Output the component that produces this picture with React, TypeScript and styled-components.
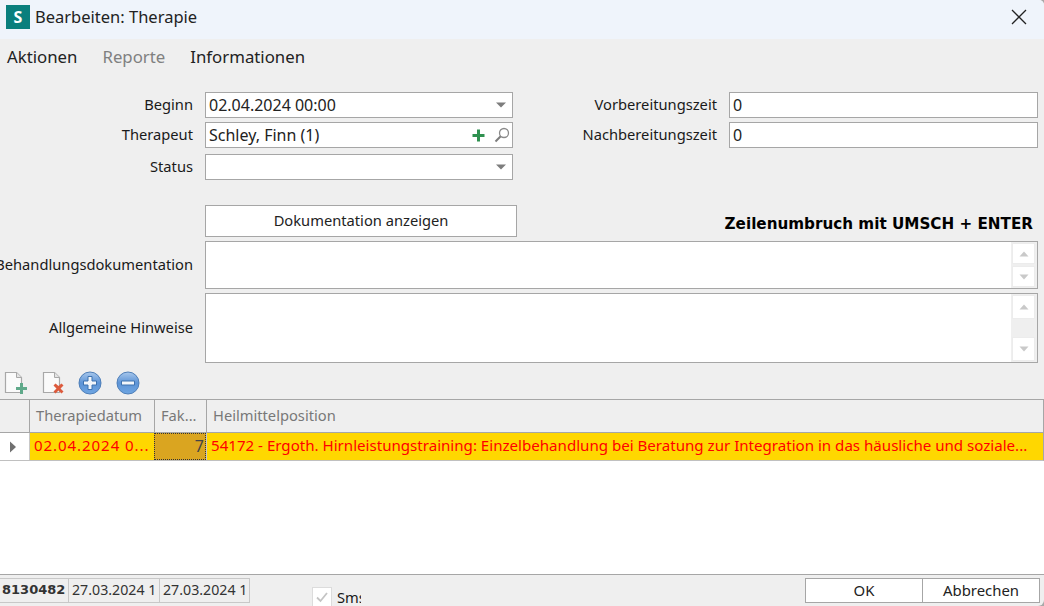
import React from "react";
import styled, { createGlobalStyle } from "styled-components";

const Global = createGlobalStyle`
  html, body { margin: 0; padding: 0; background: #a8a8a8; }
  body { width: 1044px; height: 606px; overflow: hidden; }
  * { box-sizing: border-box; }
`;

const FONT = `"Noto Sans", "Open Sans", "Liberation Sans", sans-serif`;

const Win = styled.div`
  width: 1044px; height: 606px; overflow: hidden; display: flex; flex-direction: column;
  background: #efefef; font-family: ${FONT}; font-size: 14.7px; color: #1a1a1a;
  border-radius: 0 5px 6px 0;
`;
const TitleBar = styled.div`
  height: 39px; flex: none; background: #eff4fb; display: flex; align-items: center; padding: 0 17px 6px 6px;
`;
const Logo = styled.div`
  width: 24px; height: 24px; background: #0a7f7d; color: #fff; font-weight: 700; font-size: 16px;
  display: flex; align-items: center; justify-content: center; margin-right: 5px;
`;
const Title = styled.div`font-size: 16.5px; flex: 1; color: #222;`;
const Menu = styled.div`
  height: 36px; flex: none; display: flex; align-items: center; padding: 0 0 2px 7px; gap: 25px; font-size: 16.8px;
`;
const MenuItem = styled.span<{ $off?: boolean }>`color: ${(p) => (p.$off ? "#808080" : "#222")};`;

const Form = styled.div`flex: none; padding-top: 17px; height: 292px; display: flex; flex-direction: column;`;
const Fields = styled.div`display: flex;`;
const FieldCol = styled.div<{ $w: number }>`width: ${(p) => p.$w}px; display: flex; flex-direction: column; flex: none;`;
const Row = styled.div<{ $mb?: number }>`
  display: flex; align-items: center; height: 26px; margin-bottom: ${(p) => p.$mb ?? 0}px;
`;
const Label = styled.div<{ $w: number }>`
  width: ${(p) => p.$w}px; flex: none; display: flex; justify-content: flex-end; padding: 0 12px 2px 0;
  white-space: nowrap; color: #1a1a1a;
`;
const Input = styled.div`
  height: 26px; flex: 1;
  background: #fff; border: 1px solid #a6a6a6; display: flex; align-items: center; padding: 0 2px 0 3px; color: #222;
  font-size: 16px; line-height: 22px;
`;
const InputText = styled.span`flex: 1; white-space: nowrap;`;
const ButtonRow = styled.div`display: flex; align-items: flex-end; margin-top: 25px; margin-bottom: 4px; height: 32px;`;
const DocButton = styled.div`
  margin-left: 205px; width: 312px; height: 32px; background: #fff; border: 1px solid #a6a6a6; padding-bottom: 2px;
  display: flex; align-items: center; justify-content: center; color: #222;
`;
const Hint = styled.div`
  margin: 0 0 4px auto; padding-right: 11px; font-weight: 700; font-size: 15.2px; font-family: "DejaVu Sans", sans-serif;
  color: #000; line-height: 18px; white-space: nowrap;
`;
const MemoRow = styled.div<{ $h: number }>`display: flex; align-items: center; height: ${(p) => p.$h}px; margin-bottom: 4px;`;
const Memo = styled.div`
  width: 833px; height: 100%; background: #fff; border: 1px solid #a6a6a6; display: flex; justify-content: flex-end;
`;
const Scroll = styled.div`
  width: 26px; background: #efefef; display: flex; flex-direction: column; justify-content: space-between; padding: 1px 2px 1px 1px;
`;
const ScrollBtn = styled.div<{ $h: number }>`
  height: ${(p) => p.$h}px; background: #fff; border: 1px solid #ececec; display: flex; align-items: center; justify-content: center;
`;
const Tools = styled.div`height: 28px; margin-top: 2px; flex: none; display: flex; align-items: center; padding-left: 3px; gap: 13.5px;`;

const Table = styled.div`
  flex: 1; margin-top: 2px; background: #fff; border-top: 1px solid #a6a6a6; border-bottom: 1px solid #a6a6a6; display: flex; flex-direction: column;
`;
const COLS = "29px 125px 52px 1fr";
const Head = styled.div`
  height: 33px; display: grid; grid-template-columns: ${COLS}; background: #efefef; border-bottom: 1px solid #a6a6a6; flex: none;
  border-right: 1px solid #a6a6a6;
`;
const HeadCell = styled.div`
  border-left: 1px solid #a6a6a6; padding: 0 0 2px 6px; display: flex; align-items: center; color: #787878; white-space: nowrap;
  &:first-child { border-left: 0; }
`;
const DataRow = styled.div`
  height: 28px; display: grid; grid-template-columns: ${COLS}; flex: none; border-bottom: 1px solid #c0c0c0; border-right: 1px solid #a6a6a6;
`;
const Indicator = styled.div`background: #fff; display: flex; align-items: center; padding-left: 9px;`;
const Cell = styled.div<{ $digits?: boolean }>`
  background: #ffd700; color: #f00; padding: 0 0 3px 4px; display: flex; align-items: center; overflow: hidden;
  border-left: 1px solid #c8c8c8; font-size: 15.1px; letter-spacing: ${(p) => (p.$digits ? "0.9px" : "0")};
  white-space: nowrap;
`;
const FocusCell = styled.div`
  background: #daa520; color: #444; display: flex; align-items: center; justify-content: flex-end; padding: 0 2px 2px 0;
  outline: 1px dotted #333; outline-offset: -1px; font-size: 16px;
`;

const Bottom = styled.div`height: 31px; flex: none; display: flex; padding: 3px 4px 0 0;`;
const Stamp = styled.div`display: flex; height: 25px;`;
const StampCell = styled.div<{ $w: number; $bold?: boolean }>`
  width: ${(p) => p.$w}px; border: 1px solid #c8c8c8; border-left-width: ${(p) => (p.$bold ? 0 : 1)}px; margin-left: ${(p) => (p.$bold ? 0 : -1)}px;
  display: flex; align-items: center; padding: 0 0 2px ${(p) => (p.$bold ? 2 : 3)}px; white-space: nowrap; overflow: hidden; color: #333;
  font-weight: ${(p) => (p.$bold ? 700 : 400)}; font-family: ${(p) => (p.$bold ? `"DejaVu Sans", sans-serif` : FONT)};
  font-size: ${(p) => (p.$bold ? 13 : 14.2)}px;
`;
const Check = styled.div`
  margin: 9px 0 0 62px; width: 49px; height: 30px; display: flex; gap: 5px; overflow: hidden; white-space: nowrap; flex: none;
`;
const CheckBox = styled.div`
  width: 20px; height: 20px; flex: none; background: #fff; border: 1px solid #dcdcdc; display: flex; align-items: center; justify-content: center;
`;
const Actions = styled.div`margin-left: auto; display: flex; height: 25px;`;
const Action = styled.div`
  width: 118px; background: #fff; border: 1px solid #a6a6a6; display: flex; align-items: center; justify-content: center; color: #222;
  font-size: 14.9px; padding-bottom: 1px; & + & { margin-left: -1px; }
`;

const Caret = () => (
  <svg width="12" height="6" viewBox="0 0 12 6" style={{ marginRight: 3 }}><path d="M1 0.5h10L6 5.5z" fill="#7d7d7d" /></svg>
);
const Tri = ({ up }: { up?: boolean }) => (
  <svg width="10" height="6" viewBox="0 0 10 6"><path d={up ? "M5 0.5L9.5 5.5H0.5z" : "M0.5 0.5H9.5L5 5.5z"} fill="#c9c9c9" /></svg>
);
const Plus = () => (
  <svg width="13" height="13" viewBox="0 0 13 13" style={{ marginRight: 9 }}><path d="M5 .5h3V5h4.500v3H8v4.500H5V8H.5V5H5z" fill="#2f9150" /></svg>
);
const Search = () => (
  <svg width="16" height="16" viewBox="0 0 16 16"><circle cx="10" cy="6" r="4.500" fill="none" stroke="#8a8a8a" strokeWidth="1.300" /><path d="M6.700 9.300L1.500 14.500" stroke="#7d7d7d" strokeWidth="2" /></svg>
);
const Close = () => (
  <svg width="16" height="16" viewBox="0 0 16 16"><path d="M1 1l14 14M15 1L1 15" stroke="#222" strokeWidth="1.300" /></svg>
);
const Doc = ({ children }: { children: React.ReactNode }) => (
  <svg width="24" height="24" viewBox="0 0 24 24">
    <path d="M2.500 1.500h11l5 5v15h-16z" fill="#fafafa" stroke="#a8a8a8" strokeWidth="1.200" />
    <path d="M13.500 1.500v5h5" fill="#e4e4e4" stroke="#a8a8a8" strokeWidth="1" />
    {children}
  </svg>
);
const Round = ({ id, d }: { id: string; d: string }) => (
  <svg width="24" height="24" viewBox="0 0 24 24">
    <defs>
      <linearGradient id={id} x1="0" y1="0" x2="0" y2="1">
        <stop offset="0" stopColor="#a9c8ec" /><stop offset="0.5" stopColor="#5c93d6" /><stop offset="1" stopColor="#6fa6e2" />
      </linearGradient>
    </defs>
    <circle cx="12" cy="12" r="11" fill={`url(#${id})`} stroke="#4f7fb8" strokeWidth="1" />
    <path d={d} fill="#f2f6fb" stroke="#3d72b0" strokeWidth="1" />
  </svg>
);
const Arrow = () => (
  <svg width="8" height="12" viewBox="0 0 8 12"><path d="M1 0.500L7 6L1 11.500z" fill="#707070" /></svg>
);
const Tick = () => (
  <svg width="14" height="12" viewBox="0 0 14 12"><path d="M2 6.500L5.500 10L12 2" fill="none" stroke="#c4c4c4" strokeWidth="1.800" /></svg>
);

export default function App() {
  return (
    <Win>
      <Global />
      <TitleBar>
        <Logo>S</Logo>
        <Title>Bearbeiten: Therapie</Title>
        <Close />
      </TitleBar>
      <Menu>
        <MenuItem>Aktionen</MenuItem>
        <MenuItem $off>Reporte</MenuItem>
        <MenuItem>Informationen</MenuItem>
      </Menu>
      <Form>
        <Fields>
          <FieldCol $w={513}>
            <Row $mb={4}>
              <Label $w={205}>Beginn</Label>
              <Input><InputText>02.04.2024 00:00</InputText><Caret /></Input>
            </Row>
            <Row $mb={6}>
              <Label $w={205}>Therapeut</Label>
              <Input><InputText>Schley, Finn (1)</InputText><Plus /><Search /></Input>
            </Row>
            <Row>
              <Label $w={205}>Status</Label>
              <Input><InputText /><Caret /></Input>
            </Row>
          </FieldCol>
          <FieldCol $w={525}>
            <Row $mb={4}>
              <Label $w={216}>Vorbereitungszeit</Label>
              <Input>0</Input>
            </Row>
            <Row>
              <Label $w={216}>Nachbereitungszeit</Label>
              <Input>0</Input>
            </Row>
          </FieldCol>
        </Fields>
        <ButtonRow>
          <DocButton>Dokumentation anzeigen</DocButton>
          <Hint>Zeilenumbruch mit UMSCH + ENTER</Hint>
        </ButtonRow>
        <MemoRow $h={48}>
          <Label $w={205}>Behandlungsdokumentation</Label>
          <Memo>
            <Scroll>
              <ScrollBtn $h={21}><Tri up /></ScrollBtn>
              <ScrollBtn $h={21}><Tri /></ScrollBtn>
            </Scroll>
          </Memo>
        </MemoRow>
        <MemoRow $h={70}>
          <Label $w={205}>Allgemeine Hinweise</Label>
          <Memo>
            <Scroll>
              <ScrollBtn $h={24}><Tri up /></ScrollBtn>
              <ScrollBtn $h={24}><Tri /></ScrollBtn>
            </Scroll>
          </Memo>
        </MemoRow>
      </Form>
      <Tools>
        <Doc><path d="M17 12h3v4h4v3h-4v4h-3v-4h-4v-3h4z" fill="#5fa98a" /></Doc>
        <Doc><path d="M14.500 12.500l3 2.500 3-2.500 2 2-3 3 3 3-2 2-3-3-3 3-2-2 3-3-3-3z" fill="#dc5a3c" /></Doc>
        <Round id="gp" d="M10 5.500h4V10h4.500v4H14v4.500h-4V14H5.500v-4H10z" />
        <Round id="gm" d="M5.500 10h13v4h-13z" />
      </Tools>
      <Table>
        <Head>
          <HeadCell />
          <HeadCell>Therapiedatum</HeadCell>
          <HeadCell>Fak...</HeadCell>
          <HeadCell>Heilmittelposition</HeadCell>
        </Head>
        <DataRow>
          <Indicator><Arrow /></Indicator>
          <Cell $digits>02.04.2024 0...</Cell>
          <FocusCell>7</FocusCell>
          <Cell>54172 - Ergoth. Hirnleistungstraining: Einzelbehandlung bei Beratung zur Integration in das häusliche und soziale...</Cell>
        </DataRow>
      </Table>
      <Bottom>
        <Stamp>
          <StampCell $w={69} $bold>8130482</StampCell>
          <StampCell $w={92}>27.03.2024 1</StampCell>
          <StampCell $w={91}>27.03.2024 1</StampCell>
        </Stamp>
        <Check><CheckBox><Tick /></CheckBox>Sms</Check>
        <Actions>
          <Action>OK</Action>
          <Action>Abbrechen</Action>
        </Actions>
      </Bottom>
    </Win>
  );
}
